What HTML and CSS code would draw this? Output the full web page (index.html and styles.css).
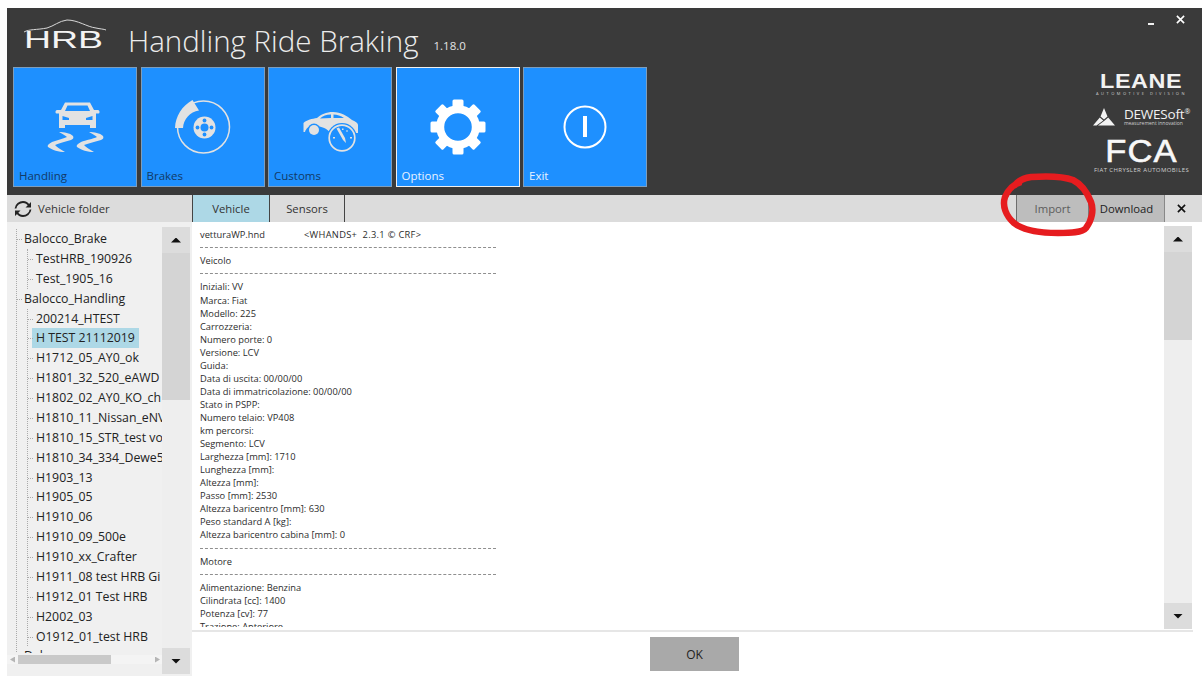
FILE: index.html
```html
<!DOCTYPE html>
<html lang="en">
<head>
<meta charset="utf-8">
<title>HRB</title>
<link rel="stylesheet" href="styles.css">
</head>
<body>
<div class="app">
  <header class="header">
    <div class="header-main">
      <div class="brand">
        <div class="hrb">
          <svg class="hrb-roof" viewBox="0 0 84 14" aria-hidden="true"><path d="M1 13C6 10 14 11 24 9C31 7 36 2 44 1C55 1 64 8 73 9C77 10 81 10 83 11" fill="none" stroke="#d8d8d8" stroke-width="1"/></svg>
          <span class="hrb-text">HRB</span>
        </div>
        <h1 class="title">Handling Ride Braking</h1>
        <span class="version">1.18.0</span>
      </div>
      <nav class="tiles">
        <a class="tile">
          <svg class="tile-icon" viewBox="0 0 60 60" aria-hidden="true">
            <path fill="#e2e2e2" fill-rule="evenodd" d="M20 5.500H45L49 13H53C54 13 54.500 14 54.500 15C54.500 16 54 16.500 53 16.500H51V31H45V28H20V31H14V16.500H12C11 16.500 10.500 16 10.500 15C10.500 14 11 13 12 13H16ZM22.500 8.500L20 14H45L42.500 8.500ZM17.500 19V23H24V21ZM47.500 19L41 21V23H47.500Z"/>
            <path fill="#e2e2e2" d="M14 35C19 35 25 36 28 39C29 41 28 42 26 43C20 45 14 46 10 48C12 50 16 53 20 55C14 55 7 53 3 50C2 48 4 47 7 45C12 43 18 42 22 40C20 38 17 37 14 35Z"/>
            <path fill="#e2e2e2" d="M44 35C49 35 55 36 58 39C59 41 58 42 56 43C50 45 44 46 39 48C41 50 45 53 49 55C43 55 36 53 32 50C31 48 33 47 36 45C41 43 48 42 52 40C50 38 47 37 44 35Z"/>
          </svg>
          <span class="tile-label">Handling</span>
        </a>
        <a class="tile">
          <svg class="tile-icon" viewBox="0 0 60 60" aria-hidden="true">
            <circle cx="30.500" cy="30" r="26" fill="none" stroke="#e2e2e2" stroke-width="1.500"/>
            <path fill="#e2e2e2" d="M2 31C2.500 19 9 9 19.500 3L26 13.500C17 15 10.500 22 10 31Z"/>
            <circle cx="31.500" cy="30.500" r="11" fill="#e2e2e2"/>
            <circle cx="31.500" cy="30.500" r="4" fill="#1e90ff"/>
            <circle cx="31.500" cy="23.500" r="1.900" fill="#1e90ff"/>
            <circle cx="31.500" cy="37.500" r="1.900" fill="#1e90ff"/>
            <circle cx="24.500" cy="30.500" r="1.900" fill="#1e90ff"/>
            <circle cx="38.500" cy="30.500" r="1.900" fill="#1e90ff"/>
          </svg>
          <span class="tile-label">Brakes</span>
        </a>
        <a class="tile">
          <svg class="tile-icon" viewBox="0 0 60 60" aria-hidden="true">
            <path fill="#e2e2e2" fill-rule="evenodd" d="M3.500 35V26C7 22.500 12 22 17 21C21 17.500 26 15 33 15C41 15 47 19 52 23C56 25 58 26 58 28V36H30C28 32 22 29 14 29C9 29 6 31 5 35ZM20 21.500L31 21V17.500C26 17.500 23 19 20 21.500ZM33.500 17.500V21H44C41 19 37 17.500 33.500 17.500Z"/>
            <circle cx="14" cy="33" r="6.500" fill="#1e90ff"/>
            <circle cx="14" cy="33" r="5" fill="#e2e2e2"/>
            <circle cx="42" cy="41" r="15" fill="#1e90ff"/>
            <circle cx="42" cy="41" r="12.800" fill="none" stroke="#e2e2e2" stroke-width="1.700"/>
            <path fill="#e2e2e2" d="M36.500 31.500L39 30.500L45 41L46 46L43 43ZM42 31.500h1.500v1.500H42ZM47 33l1 1-1 1-1-1ZM33 40h2v1.500h-2ZM50 40h2v1.500h-2Z"/>
          </svg>
          <span class="tile-label">Customs</span>
        </a>
        <a class="tile tile-focus">
          <svg class="tile-icon" viewBox="0 0 60 60" aria-hidden="true">
            <g fill="#fff">
              <rect x="24.500" y="2.500" width="11" height="10" rx="1.500"/>
              <rect x="24.500" y="2.500" width="11" height="10" rx="1.500" transform="rotate(45 30 30)"/>
              <rect x="24.500" y="2.500" width="11" height="10" rx="1.500" transform="rotate(90 30 30)"/>
              <rect x="24.500" y="2.500" width="11" height="10" rx="1.500" transform="rotate(135 30 30)"/>
              <rect x="24.500" y="2.500" width="11" height="10" rx="1.500" transform="rotate(180 30 30)"/>
              <rect x="24.500" y="2.500" width="11" height="10" rx="1.500" transform="rotate(225 30 30)"/>
              <rect x="24.500" y="2.500" width="11" height="10" rx="1.500" transform="rotate(270 30 30)"/>
              <rect x="24.500" y="2.500" width="11" height="10" rx="1.500" transform="rotate(315 30 30)"/>
            </g>
            <circle cx="30" cy="30" r="17.800" fill="none" stroke="#fff" stroke-width="8"/>
          </svg>
          <span class="tile-label">Options</span>
        </a>
        <a class="tile">
          <svg class="tile-icon" viewBox="0 0 60 60" aria-hidden="true">
            <circle cx="30" cy="30" r="20.500" fill="none" stroke="#fff" stroke-width="2"/>
            <rect x="28" y="19" width="4" height="21" fill="#fff"/>
          </svg>
          <span class="tile-label">Exit</span>
        </a>
      </nav>
    </div>
    <aside class="header-side">
      <div class="win-controls">
        <span class="win-min"></span>
        <svg class="win-x" viewBox="0 0 10 10" aria-hidden="true"><path d="M1 1L9 9M9 1L1 9" stroke="#fff" stroke-width="1.800"/></svg>
      </div>
      <div class="logos">
        <div class="leane">
          <span class="leane-name">LEANE</span>
          <span class="leane-sub">AUTOMOTIVE DIVISION</span>
        </div>
        <div class="dewe">
          <svg class="dewe-mark" viewBox="0 0 22 18" aria-hidden="true"><path fill="#f2f2f2" d="M11 0L14.500 8.500L11 11.500L7.500 8.500ZM6.800 9.500L10.300 12.500L3.500 17.500H0ZM15.200 9.500L22 17.500H5L11.700 12.500Z"/></svg>
          <div class="dewe-text">
            <span class="dewe-name">DEWESoft<sup class="dewe-reg">®</sup></span>
            <span class="dewe-sub">measurement innovation</span>
          </div>
        </div>
        <div class="fca">
          <span class="fca-name">FCA</span>
          <span class="fca-sub">FIAT CHRYSLER AUTOMOBILES</span>
        </div>
      </div>
    </aside>
  </header>

  <div class="workspace">
    <section class="sidebar">
      <div class="side-head">
        <svg class="refresh" viewBox="0 0 18 16" aria-hidden="true">
          <path d="M1.500 7.500C2 3.500 5.500 1 9 1C11.500 1 13.500 2 15 4.500M16.500 8.500C16 12.500 12.500 15 9 15C6.500 15 4.500 14 3 11.500" fill="none" stroke="#222" stroke-width="1.800"/>
          <path d="M17 1V6.500H11.500Z M1 15V9.500H6.500Z" fill="#222"/>
        </svg>
        <span class="side-title">Vehicle folder</span>
      </div>
      <div class="side-body">
        <div class="tree-col">
          <div class="tree">
            <ul class="tree-root">
              <li class="node root">Balocco_Brake
                <ul class="tree-kids">
                  <li class="node">TestHRB_190926</li>
                  <li class="node">Test_1905_16</li>
                </ul>
              </li>
              <li class="node root">Balocco_Handling
                <ul class="tree-kids">
                  <li class="node">200214_HTEST</li>
                  <li class="node"><span class="selected">H TEST 21112019</span></li>
                  <li class="node">H1712_05_AY0_ok</li>
                  <li class="node">H1801_32_520_eAWD</li>
                  <li class="node">H1802_02_AY0_KO_ch</li>
                  <li class="node">H1810_11_Nissan_eNV</li>
                  <li class="node">H1810_15_STR_test vo</li>
                  <li class="node">H1810_34_334_Dewe5</li>
                  <li class="node">H1903_13</li>
                  <li class="node">H1905_05</li>
                  <li class="node">H1910_06</li>
                  <li class="node">H1910_09_500e</li>
                  <li class="node">H1910_xx_Crafter</li>
                  <li class="node">H1911_08 test HRB Gi</li>
                  <li class="node">H1912_01 Test HRB</li>
                  <li class="node">H2002_03</li>
                  <li class="node">O1912_01_test HRB</li>
                </ul>
              </li>
              <li class="node root">Debug</li>
            </ul>
          </div>
          <div class="hscroll">
            <span class="harrow harrow-left"></span>
            <span class="hthumb"></span>
            <span class="harrow harrow-right"></span>
          </div>
        </div>
        <div class="vscroll vscroll-side">
          <span class="vbtn"><i class="arrow-up"></i></span>
          <span class="vthumb vthumb-side"></span>
          <span class="vbtn"><i class="arrow-down"></i></span>
        </div>
      </div>
    </section>

    <section class="panel">
      <div class="tabbar">
        <span class="tab tab-active">Vehicle</span>
        <span class="tab tab-plain">Sensors</span>
        <span class="tab-gap"></span>
        <span class="action action-import">Import</span>
        <span class="action action-download">Download</span>
        <span class="action-close"><svg viewBox="0 0 10 10" aria-hidden="true"><path d="M1 1L9 9M9 1L1 9" stroke="#111" stroke-width="1.800"/></svg></span>
      </div>
      <div class="doc-row">
        <div class="doc">
          <p class="line"><span class="file">vetturaWP.hnd</span><span class="stamp">&lt;WHANDS+&nbsp; 2.3.1 © CRF&gt;</span></p>
          <hr class="rule">
          <p class="line">Veicolo</p>
          <hr class="rule">
          <p class="line">Iniziali: VV</p>
          <p class="line">Marca: Fiat</p>
          <p class="line">Modello: 225</p>
          <p class="line">Carrozzeria:</p>
          <p class="line">Numero porte: 0</p>
          <p class="line">Versione: LCV</p>
          <p class="line">Guida:</p>
          <p class="line">Data di uscita: 00/00/00</p>
          <p class="line">Data di immatricolazione: 00/00/00</p>
          <p class="line">Stato in PSPP:</p>
          <p class="line">Numero telaio: VP408</p>
          <p class="line">km percorsi:</p>
          <p class="line">Segmento: LCV</p>
          <p class="line">Larghezza [mm]: 1710</p>
          <p class="line">Lunghezza [mm]:</p>
          <p class="line">Altezza [mm]:</p>
          <p class="line">Passo [mm]: 2530</p>
          <p class="line">Altezza baricentro [mm]: 630</p>
          <p class="line">Peso standard A [kg]:</p>
          <p class="line">Altezza baricentro cabina [mm]: 0</p>
          <hr class="rule">
          <p class="line">Motore</p>
          <hr class="rule">
          <p class="line">Alimentazione: Benzina</p>
          <p class="line">Cilindrata [cc]: 1400</p>
          <p class="line">Potenza [cv]: 77</p>
          <p class="line">Trazione: Anteriore</p>
        </div>
        <div class="vscroll vscroll-doc">
          <span class="vbtn"><i class="arrow-up"></i></span>
          <span class="vthumb vthumb-doc"></span>
          <span class="vbtn"><i class="arrow-down"></i></span>
        </div>
      </div>
      <footer class="footer">
        <button class="ok" type="button">OK</button>
      </footer>
    </section>
  </div>
</div>
<svg class="annotation" viewBox="0 0 1202 676" aria-hidden="true">
  <path d="M1019 183C1012 185 1008 190 1005 197C1002 206 1006 216 1014 223C1024 231 1040 233 1058 233C1070 233 1082 233 1086 228C1092 220 1094 210 1091 202C1087 192 1081 184 1073 180C1062 176 1045 176 1031 177C1024 178 1018 181 1015 185" fill="none" stroke="#e61c1f" stroke-width="6.500" stroke-linecap="round"/>
</svg>
</body>
</html>
```
FILE: styles.css
```css
* { box-sizing: border-box; }
html, body { margin: 0; padding: 0; height: 676px; overflow: hidden; background: #fff; }
body { font-family: "Open Sans", "Noto Sans", sans-serif; color: #222; }

.app { margin: 8px 0 0 7px; height: 668px; display: flex; flex-direction: column; }

/* header */
.header { height: 187px; flex: none; background: #3a3a3a; display: flex; justify-content: space-between; }
.header-main { padding-left: 6px; }
.brand { height: 59px; display: flex; align-items: flex-start; }
.hrb { width: 105px; margin-left: 10px; padding-top: 11px; display: flex; flex-direction: column; }
.hrb-roof { width: 84px; height: 14px; margin-bottom: -5px; display: block; }
.hrb-text { font-family: "Liberation Sans", sans-serif; font-size: 24px; line-height: 24px; color: #f4f4f4; transform: scaleX(1.560); transform-origin: left; margin-left: 1px; }
.title { margin: 12px 0 0; font-size: 29.500px; line-height: 42px; font-weight: 300; color: #ececec; white-space: nowrap; }
.version { margin: 29px 0 0 15px; font-size: 11.500px; line-height: 18px; color: #e4e4e4; }

.tiles { display: flex; gap: 3.500px; }
.tile { width: 124px; height: 120px; background: #1e90ff; border: 1px solid #7e9dbb; display: grid; }
.tile-focus { border-color: #f0f0f0; }
.tile-icon { grid-area: 1 / 1; width: 60px; height: 60px; align-self: center; justify-self: center; }
.tile-label { grid-area: 1 / 1; align-self: end; padding: 0 0 2px 5px; font-size: 11.500px; line-height: 16px; color: #123a66; }
.tile-focus .tile-label, .tile:last-child .tile-label { color: #e8f2ff; }

.header-side { width: 115px; display: flex; flex-direction: column; align-items: center; padding-right: 6px; }
.win-controls { height: 59px; align-self: stretch; display: flex; justify-content: flex-end; gap: 22px; padding: 7px 11px 0 0; }
.win-min { width: 6px; height: 2px; margin-top: 8px; background: #f0f0f0; }
.win-x { width: 9px; height: 9px; }
.logos { display: flex; flex-direction: column; align-items: center; margin-top: 5px; }
.leane { display: flex; flex-direction: column; align-items: center; }
.leane-name { font-family: "Liberation Sans", sans-serif; font-size: 20px; line-height: 19px; font-weight: 700; color: #f2f2f2; transform: scaleX(1.170); letter-spacing: .5px; }
.leane-sub { font-size: 4px; line-height: 5px; letter-spacing: 2.500px; color: #cfcfcf; white-space: nowrap; }
.dewe { display: flex; gap: 9px; margin-top: 12px; align-items: flex-start; }
.dewe-mark { width: 22px; height: 18px; }
.dewe-text { display: flex; flex-direction: column; gap: 1px; }
.dewe-name { font-size: 13.500px; line-height: 13px; height: 12px; color: #f2f2f2; white-space: nowrap; letter-spacing: -.2px; }
.dewe-reg { font-size: 7px; line-height: 0; }
.dewe-sub { font-size: 5px; line-height: 5px; color: #cfcfcf; white-space: nowrap; }
.fca { display: flex; flex-direction: column; align-items: center; margin-top: 11px; }
.fca-name { font-family: "Liberation Sans", sans-serif; font-size: 32px; line-height: 28px; color: #f8f8f8; letter-spacing: 1px; transform: scaleX(1.080); -webkit-text-stroke: .6px #f8f8f8; }
.fca-sub { font-size: 6px; line-height: 8px; color: #d0d0d0; white-space: nowrap; margin-top: 1px; letter-spacing: .4px; }

/* workspace */
.workspace { flex: 1; min-height: 0; display: flex; }

.sidebar { width: 185px; flex: none; display: flex; flex-direction: column; background: #f0f0f0; }
.side-head { height: 27px; flex: none; background: #dcdcdc; display: flex; align-items: center; padding-left: 7px; gap: 6px; }
.refresh { width: 18px; height: 16px; }
.side-title { font-size: 11.300px; color: #333; }
.side-body { flex: 1; min-height: 0; display: flex; padding: 5px 2px 2px 0; }
.tree-col { width: 155px; flex: none; display: flex; flex-direction: column; }
.tree { height: 426px; overflow: hidden; padding-top: 2px; }
.tree-root { list-style: none; margin: 0 0 0 9px; padding: 0; border-left: 1px dotted #aaa; }
.tree-kids { list-style: none; margin: 0 0 0 3px; padding: 0; border-left: 1px dotted #aaa; }
.node { font-size: 12.300px; line-height: 19.880px; color: #222; white-space: nowrap; padding-left: 7px; position: relative; }
.node::before { content: ""; position: absolute; left: 0; top: 10px; width: 5px; border-top: 1px dotted #aaa; }
.tree-kids .node { padding-left: 8px; }
.selected { display: inline-block; background: #add8e6; margin-left: -4px; padding: 0 4px; }

.hscroll { height: 9px; margin-top: 2px; background: #f4f4f4; display: flex; align-items: center; padding: 0 2px 0 3px; flex: none; }
.harrow { width: 5px; height: 6px; background: #b5b5b5; flex: none; }
.harrow-left { clip-path: polygon(100% 0, 0 50%, 100% 100%); }
.harrow-right { clip-path: polygon(0 0, 100% 50%, 0 100%); margin-left: auto; }
.hthumb { width: 93px; height: 9px; background: #c9c9c9; margin-left: 3px; }

.vscroll { width: 28px; flex: none; display: flex; flex-direction: column; background: #eee; }
.vbtn { height: 26px; flex: none; background: #dcdcdc; display: flex; align-items: center; justify-content: center; }
.vthumb { flex: none; background: #d4d4d4; }
.vscroll .vbtn:last-child { margin-top: auto; }
.vthumb-side { height: 147px; }
.vthumb-doc { height: 88px; }
.arrow-up, .arrow-down { display: block; width: 10px; height: 5px; background: #111; }
.arrow-up { clip-path: polygon(50% 0, 100% 100%, 0 100%); }
.arrow-down { clip-path: polygon(0 0, 100% 0, 50% 100%); }

/* right panel */
.panel { flex: 1; min-width: 0; display: flex; flex-direction: column; }
.tabbar { height: 27px; flex: none; background: #dcdcdc; display: flex; font-size: 11.300px; }
.tab { width: 77px; display: flex; align-items: center; justify-content: center; color: #333; border-left: 1px solid #444; }
.tab-active { background: #add8e6; }
.tab-plain { width: 76px; border-right: 1px solid #444; }
.tab-gap { flex: 1; }
.action { display: flex; align-items: center; justify-content: center; background: #bdbdbd; }
.action-import { width: 73px; color: #5c5c5c; border-left: 1px solid #6e6e6e; border-right: 1px solid #777; }
.action-download { width: 75px; color: #222; }
.action-close { width: 38px; flex: none; border-left: 1px solid #888; display: flex; align-items: center; padding-left: 12px; }
.action-close svg { width: 9px; height: 9px; }

.doc-row { height: 407px; flex: none; display: flex; padding-right: 10px; }
.doc { flex: 1; min-width: 0; overflow: hidden; margin-bottom: 2px; padding: 6px 0 0 8px; font-size: 9.300px; line-height: 13px; color: #2c2c2c; }
.line { margin: 0; height: 13.050px; white-space: nowrap; }
.file { display: inline-block; width: 104px; }
.stamp { letter-spacing: .3px; }
.rule { margin: 6.100px 0; height: 1px; width: 296px; border: 0; border-top: 1px dashed #8f8f8f; }
.vscroll-doc { margin-top: 4px; }

.footer { flex: 1; min-height: 0; margin-right: 9px; border-top: 2px solid #e6e6e6; margin-top: 1px; display: flex; justify-content: center; padding-top: 5px; }
.ok { width: 89px; height: 34px; margin-left: 4px; border: 0; background: #a9a9a9; color: #222; font: 12px "Open Sans", sans-serif; }

.annotation { position: absolute; left: 0; top: 0; width: 1202px; height: 676px; pointer-events: none; }
```
